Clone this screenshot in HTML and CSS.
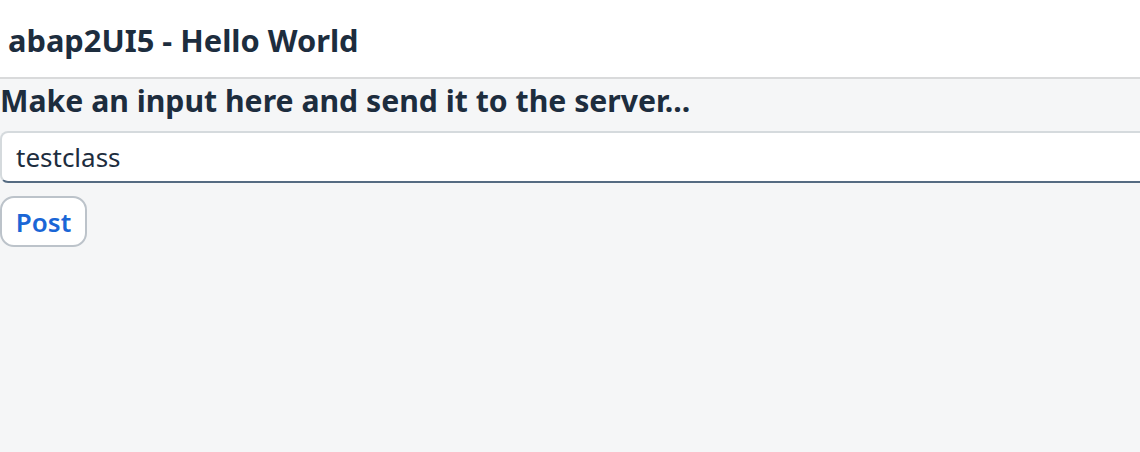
FILE: index.html
```html
<!DOCTYPE html>
<html>
<head>
<meta charset="utf-8">
<link rel="stylesheet" href="styles.css">
</head>
<body>
<header class="shell-bar">
  <h1 class="title">abap2UI5 - Hello World</h1>
</header>
<main class="content">
  <label class="label" for="inp">Make an input here and send it to the server...</label>
  <input id="inp" class="input" type="text" value="testclass">
  <button class="btn" type="button">Post</button>
</main>
</body>
</html>
```
FILE: styles.css
```css
html, body {
  margin: 0;
  padding: 0;
  height: 100%;
}
body {
  background: #f5f6f7;
  font-family: "Noto Sans", "Open Sans", sans-serif;
  color: #1d2d3e;
  overflow: hidden;
}
.shell-bar {
  background: #ffffff;
  height: 77px;
  border-bottom: 2px solid #d9dadb;
  display: flex;
  align-items: center;
  padding-left: 8px;
}
.title {
  margin: 0;
  font-size: 30.8px;
  font-weight: 700;
  letter-spacing: 0;
  line-height: 40px;
  color: #1d2d3e;
  padding-top: 2px;
}
.content {
  display: flex;
  flex-direction: column;
  align-items: flex-start;
  padding-left: 0;
}
.label {
  font-size: 30.2px;
  font-weight: 700;
  margin-top: 2px;
  line-height: 40px;
}
.input {
  box-sizing: border-box;
  width: 1160px;
  height: 52px;
  margin-top: 10px;
  border: 2px solid #d5dadd;
  border-bottom: 2px solid #556b82;
  border-radius: 8px;
  background: #fff;
  padding: 0 14px;
  font-family: inherit;
  font-size: 26px;
  color: #1d2d3e;
  outline: none;
}
.btn {
  box-sizing: border-box;
  margin-top: 13px;
  height: 51px;
  width: 87px;
  border: 2px solid #bcc3ca;
  border-radius: 14px;
  background: #fff;
  color: #1a66d6;
  font-family: inherit;
  font-size: 26px;
  font-weight: 600;
  padding: 0;
}
```
